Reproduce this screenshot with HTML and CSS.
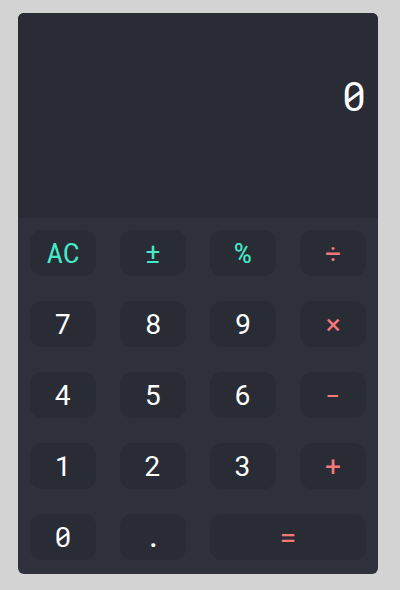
FILE: index.html
```html
<!DOCTYPE html>
<html lang="en">
<head>
<meta charset="utf-8">
<title>Calculator</title>
<link rel="stylesheet" href="styles.css">
</head>
<body>
<div class="calc">
  <div class="display"><span class="value">0</span></div>
  <div class="keys">
    <button class="key fn">AC</button>
    <button class="key fn">±</button>
    <button class="key fn">%</button>
    <button class="key op">÷</button>
    <button class="key">7</button>
    <button class="key">8</button>
    <button class="key">9</button>
    <button class="key op">×</button>
    <button class="key">4</button>
    <button class="key">5</button>
    <button class="key">6</button>
    <button class="key op">-</button>
    <button class="key">1</button>
    <button class="key">2</button>
    <button class="key">3</button>
    <button class="key op">+</button>
    <button class="key">0</button>
    <button class="key">.</button>
    <button class="key op wide">=</button>
  </div>
</div>
</body>
</html>
```
FILE: styles.css
```css
html, body {
  margin: 0;
  padding: 0;
  background: #d3d3d3;
}
body {
  padding: 13px 0 0 18px;
  font-family: "Roboto Mono", "DejaVu Sans Mono", monospace;
}
.calc {
  width: 360px;
  border-radius: 6px;
  overflow: hidden;
  background: #2e313c;
}
.display {
  height: 205px;
  box-sizing: border-box;
  background: #292c35;
  padding: 63px 12px 0 12px;
  text-align: right;
}
.value {
  color: #ffffff;
  font-size: 40px;
  line-height: 40px;
}
.keys {
  display: grid;
  grid-template-columns: repeat(4, 1fr);
  grid-auto-rows: 46px;
  column-gap: 24px;
  row-gap: 25px;
  padding: 12px 12px 14px 12px;
}
.key {
  border: none;
  margin: 0;
  padding: 0;
  border-radius: 12px;
  background: #292c35;
  color: #ffffff;
  font-family: inherit;
  font-size: 28px;
  line-height: 46px;
}
.key.fn {
  color: #45ebc6;
}
.key.op {
  color: #f87878;
}
.key.wide {
  grid-column: span 2;
}
```
